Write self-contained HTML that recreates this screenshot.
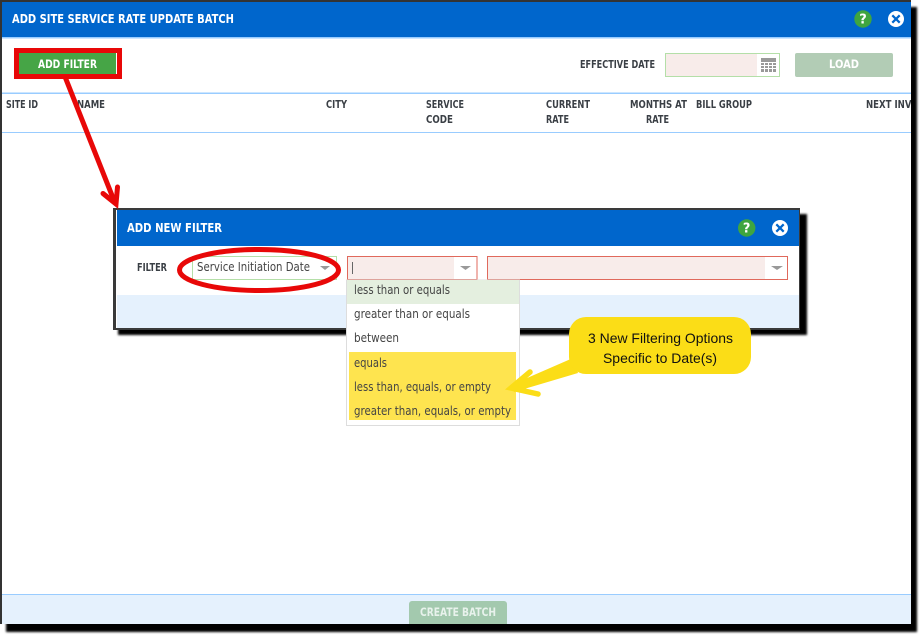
<!DOCTYPE html>
<html lang="en">
<head>
<meta charset="utf-8">
<title>Add Site Service Rate Update Batch</title>
<style>
html,body{margin:0;padding:0;width:923px;height:636px;overflow:hidden;background:#fff}
svg{display:block}
text{font-family:"DejaVu Sans","Liberation Sans",sans-serif;font-size:11px;fill:#333}
.h{font-weight:700;fill:#3a3f45}
.w{fill:#fff;font-weight:700}
.o{fill:#444;font-size:12px}
.c{font-family:"Liberation Sans",sans-serif;font-size:14px;fill:#111}
</style>
</head>
<body>
<svg width="923" height="636" viewBox="0 0 923 636" xmlns="http://www.w3.org/2000/svg">
<defs>
<filter id="s" x="-5%" y="-5%" width="110%" height="110%"><feGaussianBlur stdDeviation="1"/></filter>
<clipPath id="m"><rect x="2" y="2" width="909" height="622"/></clipPath>
</defs>
<rect width="923" height="636" fill="#fff"/>

<!-- main window shadow and frame -->
<rect x="6" y="7" width="911" height="625" fill="#000" filter="url(#s)"/>
<rect x="0" y="0" width="911" height="624" fill="#333"/>
<rect x="2" y="2" width="909" height="622" fill="#fff"/>
<rect x="2" y="2" width="909" height="35" fill="#0066cc"/>
<rect x="2" y="37" width="909" height="1.5" fill="#99ccff"/>
<text class="w" x="12" y="23" style="font-size:12.5px" textLength="222" lengthAdjust="spacingAndGlyphs">ADD SITE SERVICE RATE UPDATE BATCH</text>

<!-- header icons -->
<circle cx="863" cy="19" r="8.700" fill="#3fa53f"/>
<text class="w" x="863" y="23.500" text-anchor="middle" style="font-size:13px">?</text>
<circle cx="896" cy="19" r="8" fill="#fff"/>
<path d="M892.300 15.300L899.700 22.700M899.700 15.300L892.300 22.700" stroke="#0066cc" stroke-width="2.200" fill="none"/>

<!-- toolbar -->
<rect x="19" y="53" width="98" height="21" fill="#46a546"/>
<rect x="116" y="53" width="1" height="21" fill="#fff"/>
<rect x="16.500" y="50.500" width="103" height="26" fill="none" stroke="#e80808" stroke-width="5"/>
<text class="w" x="38" y="68" textLength="59" lengthAdjust="spacingAndGlyphs" style="font-size:11.500px">ADD FILTER</text>

<text class="h" x="580" y="68" textLength="75" lengthAdjust="spacingAndGlyphs">EFFECTIVE DATE</text>
<rect x="665.500" y="53.500" width="114" height="23" fill="#fff" stroke="#b4dfa8"/>
<rect x="666" y="54" width="91" height="22" fill="#f8ecea"/>
<rect x="761" y="58" width="15" height="14" fill="#999"/>
<path d="M761 62.500H776M761 65.500H776M761 68.500H776M764.500 62V72M768.500 62V72M772.500 62V72" stroke="#fff" stroke-width="1" fill="none"/>
<rect x="795" y="53" width="98" height="24" rx="2" fill="#b2ccb5"/>
<text class="w" x="829" y="68" textLength="30" lengthAdjust="spacingAndGlyphs" style="font-size:11.500px">LOAD</text>

<!-- table header -->
<rect x="2" y="92.500" width="909" height="1.500" fill="#99ccff"/>
<rect x="2" y="132" width="909" height="1" fill="#99ccff"/>
<text class="h" x="6" y="108" textLength="32" lengthAdjust="spacingAndGlyphs">SITE ID</text>
<text class="h" x="77" y="108" textLength="28" lengthAdjust="spacingAndGlyphs">NAME</text>
<text class="h" x="326" y="108" textLength="21" lengthAdjust="spacingAndGlyphs">CITY</text>
<text class="h" x="426" y="108" textLength="38" lengthAdjust="spacingAndGlyphs">SERVICE</text>
<text class="h" x="426" y="123" textLength="27" lengthAdjust="spacingAndGlyphs">CODE</text>
<text class="h" x="546" y="108" textLength="44" lengthAdjust="spacingAndGlyphs">CURRENT</text>
<text class="h" x="546" y="123" textLength="23" lengthAdjust="spacingAndGlyphs">RATE</text>
<text class="h" x="630" y="108" textLength="57" lengthAdjust="spacingAndGlyphs">MONTHS AT</text>
<text class="h" x="646" y="123" textLength="23" lengthAdjust="spacingAndGlyphs">RATE</text>
<text class="h" x="696" y="108" textLength="56" lengthAdjust="spacingAndGlyphs">BILL GROUP</text>
<g clip-path="url(#m)"><text class="h" x="866" y="108" textLength="68" lengthAdjust="spacingAndGlyphs">NEXT INVOICE</text></g>

<!-- footer -->
<rect x="2" y="594" width="909" height="30" fill="#e5f1fd"/>
<rect x="2" y="594" width="909" height="1" fill="#99ccff"/>
<path d="M409 624V604a3 3 0 0 1 3-3h92a3 3 0 0 1 3 3V624H409z" fill="#a3c9ae"/>
<text class="w" x="420" y="616" textLength="76" lengthAdjust="spacingAndGlyphs" style="fill:#e8f2ec;font-size:11.500px">CREATE BATCH</text>

<!-- dialog -->
<rect x="118" y="214" width="689" height="121" fill="#000" filter="url(#s)"/>
<rect x="113" y="208" width="687" height="122" fill="#3a3a3a"/>
<rect x="116" y="210" width="683" height="118" fill="#fff"/>
<rect x="117" y="210" width="682" height="36" fill="#0066cc"/>
<rect x="117" y="295" width="682" height="33" fill="#e5f1fd"/>
<text class="w" x="127" y="232" textLength="95" lengthAdjust="spacingAndGlyphs" style="font-size:12.500px">ADD NEW FILTER</text>
<circle cx="746.700" cy="228" r="8.700" fill="#3fa53f"/>
<text class="w" x="746.700" y="232.500" text-anchor="middle" style="font-size:13px">?</text>
<circle cx="780" cy="228" r="8" fill="#fff"/>
<path d="M776.300 224.300L783.700 231.700M783.700 224.300L776.300 231.700" stroke="#0066cc" stroke-width="2.200" fill="none"/>

<text class="h" x="137" y="271" textLength="30" lengthAdjust="spacingAndGlyphs">FILTER</text>

<rect x="192.500" y="256.500" width="144" height="23" fill="#fff" stroke="#b4dfa8"/>
<text class="o" x="197" y="271" textLength="113" lengthAdjust="spacingAndGlyphs">Service Initiation Date</text>
<path d="M320 266h10l-5 4z" fill="#999"/>

<rect x="347.500" y="256.500" width="129.500" height="23" fill="#fff" stroke="#e0695c"/>
<rect x="348" y="257" width="106" height="22" fill="#f8ecea"/>
<rect x="352" y="262" width="1" height="12" fill="#666"/>
<path d="M460 266h11l-5.500 4z" fill="#999"/>

<rect x="487.500" y="256.500" width="300" height="23" fill="#fff" stroke="#e0695c"/>
<rect x="488" y="257" width="277" height="22" fill="#f8ecea"/>
<path d="M771 266h12l-6 4z" fill="#999"/>

<!-- red ellipse -->
<ellipse cx="259" cy="270" rx="79.500" ry="20.500" fill="none" stroke="#e80808" stroke-width="5"/>

<!-- dropdown -->
<rect x="346.500" y="280" width="173" height="145.500" fill="#fff" stroke="#ddd"/>
<rect x="347" y="280" width="172" height="24" fill="#e4efdf"/>
<rect x="349" y="352" width="167" height="68" fill="#fee44f"/>
<text class="o" x="354" y="294" textLength="96" lengthAdjust="spacingAndGlyphs">less than or equals</text>
<text class="o" x="354" y="318" textLength="116" lengthAdjust="spacingAndGlyphs">greater than or equals</text>
<text class="o" x="354" y="342" textLength="45" lengthAdjust="spacingAndGlyphs">between</text>
<text class="o" x="354" y="367" textLength="33" lengthAdjust="spacingAndGlyphs">equals</text>
<text class="o" x="354" y="391" textLength="137" lengthAdjust="spacingAndGlyphs">less than, equals, or empty</text>
<text class="o" x="354" y="415" textLength="157" lengthAdjust="spacingAndGlyphs">greater than, equals, or empty</text>

<!-- red arrow -->
<path d="M65.500 78L115 203" stroke="#e80808" stroke-width="5" fill="none"/>
<path d="M103 193.500L116 204L117.500 187" stroke="#e80808" stroke-width="5" fill="none" stroke-linecap="round" stroke-linejoin="miter"/>

<!-- yellow callout -->
<path d="M573 358L578 373L514 392L511 385z" fill="#fbdd17"/>
<path d="M530 372L511 388L538 394" stroke="#fbdd17" stroke-width="5.500" fill="none" stroke-linecap="round" stroke-linejoin="miter"/>
<rect x="569" y="317" width="182" height="57" rx="17" fill="#fbdd17"/>
<text class="c" x="588" y="343" textLength="145" lengthAdjust="spacingAndGlyphs">3 New Filtering Options</text>
<text class="c" x="603" y="363" textLength="114" lengthAdjust="spacingAndGlyphs">Specific to Date(s)</text>
</svg>
</body>
</html>
